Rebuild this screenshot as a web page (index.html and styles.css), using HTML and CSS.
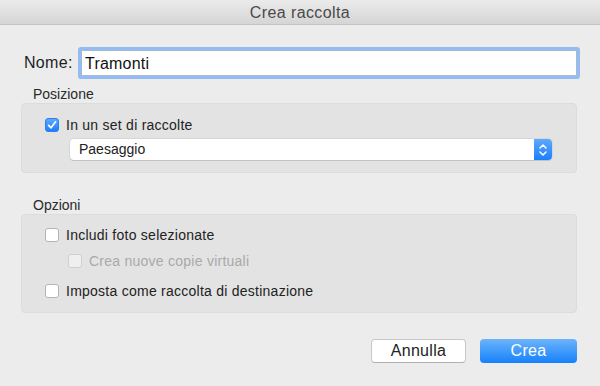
FILE: index.html
```html
<!DOCTYPE html>
<html>
<head>
  <title>Crea raccolta</title>
  <meta name="viewport" content="width=device-width, initial-scale=1.0">
  <link rel="stylesheet" href="styles.css">
</head>
<body>
  <div class="finestra">
    <!-- Barra del titolo -->
    <div class="titolo">Crea raccolta</div>

    <div class="contenuto">
      <div class="riga-nome">
        <span class="etichetta-nome">Nome:</span>
        <div class="campo">Tramonti</div>
      </div>

      <div class="sezione">Posizione</div>
      <div class="gruppo gruppo-posizione">
        <div class="opzione">
          <span class="casella attiva">
            <svg width="10" height="10" viewBox="0 0 10 10"><path d="M1.6 5.4 L4 7.8 L8.6 1.8" fill="none" stroke="#fff" stroke-width="1.7" stroke-linecap="round" stroke-linejoin="round"/></svg>
          </span>
          In un set di raccolte
        </div>
        <div class="menu">
          <span>Paesaggio</span>
          <span class="frecce">
            <svg width="10" height="14" viewBox="0 0 10 14"><path d="M2 5 L5 2 L8 5 M2 9 L5 12 L8 9" fill="none" stroke="#fff" stroke-width="1.5" stroke-linecap="round" stroke-linejoin="round"/></svg>
          </span>
        </div>
      </div>

      <div class="sezione sezione-opzioni">Opzioni</div>
      <div class="gruppo gruppo-opzioni">
        <div class="opzione"><span class="casella"></span>Includi foto selezionate</div>
        <div class="opzione rientro disattiva"><span class="casella"></span>Crea nuove copie virtuali</div>
        <div class="opzione terza"><span class="casella"></span>Imposta come raccolta di destinazione</div>
      </div>

      <div class="pulsanti">
        <button class="btn">Annulla</button>
        <button class="btn primario">Crea</button>
      </div>
    </div>
  </div>
</body>
</html>
```

FILE: styles.css
```css
body {
  margin: 0;
  padding: 0;
  background: #ececec;
  font-family: 'Liberation Sans', Arial, sans-serif;
  color: #222;
  overflow: hidden;
}
.finestra {
  width: 600px;
  height: 386px;
  background: #ececec;
}
.titolo {
  height: 24px;
  line-height: 25px;
  text-align: center;
  font-size: 16px;
  letter-spacing: 0.4px;
  color: #4a4a4a;
  background: linear-gradient(to bottom, #ebebeb, #d5d5d5);
  border-bottom: 1px solid #c4c4c4;
}
.contenuto {
  padding: 0 23px 0 21px;
}
.riga-nome {
  display: flex;
  align-items: center;
  margin-top: 25px;
  height: 26px;
}
.etichetta-nome {
  font-size: 16px;
  letter-spacing: 0.3px;
  margin-left: 3px;
  width: 57px;
  color: #1e1e1e;
}
.campo {
  flex: 1;
  height: 24px;
  line-height: 25px;
  padding-left: 3px;
  font-size: 16px;
  letter-spacing: 0.2px;
  background: #fff;
  border: 1px solid #a9b9cf;
  box-shadow: 0 0 0 3px #93bdf2;
  border-radius: 1px;
  color: #111;
}
.sezione {
  font-size: 14px;
  line-height: 16px;
  margin: 10px 0 1px 12px;
  color: #2a2a2a;
}
.sezione-opzioni {
  margin-top: 24px;
}
.gruppo {
  background: #e3e3e3;
  border: 1px solid #dcdcdc;
  border-radius: 4px;
  box-sizing: border-box;
}
.gruppo-posizione {
  height: 70px;
  padding: 13px 24px 0 23px;
}
.gruppo-opzioni {
  height: 99px;
  padding: 12px 24px 0 23px;
}
.opzione {
  display: flex;
  align-items: center;
  height: 16px;
  font-size: 14px;
  letter-spacing: 0.25px;
  color: #222;
}
.opzione + .opzione {
  margin-top: 10px;
}
.opzione.terza {
  margin-top: 14px;
}
.rientro {
  padding-left: 23px;
}
.disattiva {
  color: #a9a9a9;
}
.casella {
  width: 14px;
  height: 14px;
  box-sizing: border-box;
  margin-right: 7px;
  background: #fff;
  border: 1px solid #b4b4b4;
  border-radius: 3px;
  display: flex;
  align-items: center;
  justify-content: center;
}
.disattiva .casella {
  background: #efefef;
  border-color: #cfcfcf;
}
.casella.attiva {
  background: linear-gradient(to bottom, #5ea9fc, #1c7ffb);
  border-color: #2f7ee6;
}
.menu {
  display: flex;
  justify-content: space-between;
  margin: 6px 0 0 25px;
  height: 21px;
  background: #fff;
  border-radius: 4px;
  box-shadow: 0 1px 0 #c2c2c2, 0 0 0 1px #d6d6d6;
  font-size: 14px;
  line-height: 21px;
  overflow: hidden;
}
.menu span:first-child {
  padding-left: 9px;
}
.frecce {
  width: 18px;
  background: linear-gradient(to bottom, #5fa9fc, #1b7ffb);
  display: flex;
  align-items: center;
  justify-content: center;
}
.pulsanti {
  display: flex;
  justify-content: flex-end;
  gap: 14px;
  margin-top: 26px;
}
.btn {
  font-family: 'Liberation Sans', Arial, sans-serif;
  font-size: 16px;
  letter-spacing: 0.3px;
  height: 24px;
  width: 95px;
  padding: 0;
  border: 1px solid #c8c8c8;
  border-bottom-color: #b0b0b0;
  border-radius: 4px;
  background: #fff;
  color: #222;
}
.btn.primario {
  width: 97px;
  border: none;
  background: linear-gradient(to bottom, #6cb4fa, #1681fb);
  color: #fff;
}
```
